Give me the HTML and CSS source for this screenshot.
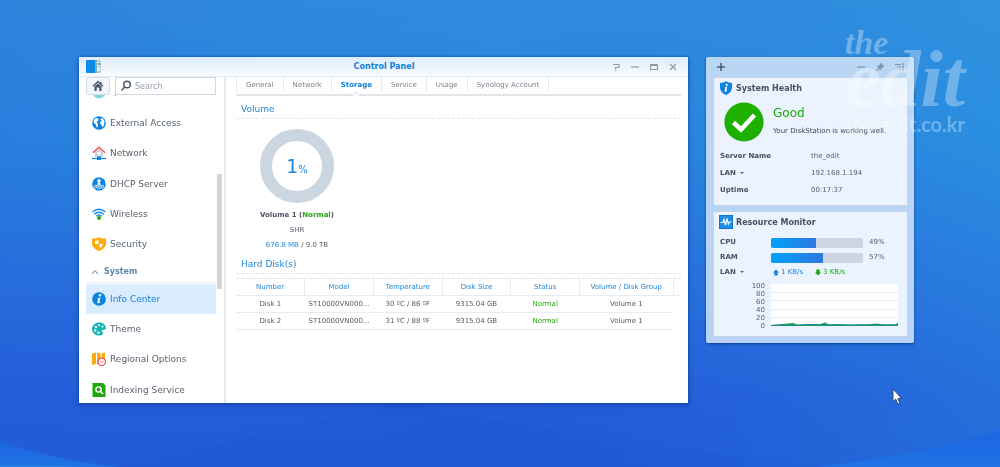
FILE: index.html
```html
<!DOCTYPE html>
<html lang="en">
<head>
<meta charset="utf-8">
<title>Control Panel</title>
<link rel="stylesheet" href="styles.css">
</head>
<body>
<svg class="wallpaper" viewBox="0 0 1000 467" preserveAspectRatio="none" aria-hidden="true">
  <defs>
    <linearGradient id="sky" x1="0" y1="0" x2="0" y2="1"><stop offset="0" stop-color="#2f8bde"/><stop offset=".3" stop-color="#2886e0"/><stop offset=".6" stop-color="#266fde"/><stop offset=".85" stop-color="#235cd9"/><stop offset="1" stop-color="#205ad7"/></linearGradient>
    <linearGradient id="side" x1="0" y1="0" x2="1" y2="0"><stop offset="0" stop-color="#2a60d4" stop-opacity=".2"/><stop offset=".5" stop-color="#2a70d8" stop-opacity="0"/><stop offset="1" stop-color="#30a8e0" stop-opacity=".25"/></linearGradient>
    <linearGradient id="wave" x1="0" y1="0" x2="0" y2="1"><stop offset="0" stop-color="#1d66e0"/><stop offset="1" stop-color="#1f72e6"/></linearGradient>
  </defs>
  <rect width="1000" height="467" fill="url(#sky)"/>
  <rect width="1000" height="467" fill="url(#side)"/>
  <path d="M400 403Q240 440 110 467H830Q600 440 400 403Z" fill="#1a4fcf" opacity=".12"/>
  <path d="M0 441Q55 460 118 467H0Z" fill="url(#wave)"/>
  <path d="M0 465Q40 465 90 467H0Z" fill="#2780ea"/>
  <path d="M1000 430Q920 455 815 467H1000Z" fill="url(#wave)"/>
</svg>

<main class="desktop">
  <section class="window" aria-label="Control Panel">
    <header class="titlebar">
      <svg class="app-icon" viewBox="0 0 15 13"><path d="M0 1Q0 0 1 0H9V13H1Q0 13 0 12Z" fill="#0c8ce8"/><path d="M4 6h2" stroke="#0868b8"/><rect x="9" width="6" height="13" rx="1" fill="#b9c8d0"/><rect x="9" width="2" height="13" fill="#7eaec6"/><rect x="11" y="2" width="3" height="4" fill="#f4f5dc"/><rect x="12" y="3" width="2" height="2" fill="#4caf50"/><rect x="11" y="7" width="3" height="4" fill="#e8eef0"/></svg>
      <h1>Control Panel</h1>
      <div class="controls">
        <button aria-label="Help"><svg viewBox="0 0 8 8"><path d="M1 1.5H7V4.5H3.5V6M3 7.5H4.5"/></svg></button>
        <button aria-label="Minimize"><svg viewBox="0 0 8 8"><path d="M0 4H8"/></svg></button>
        <button aria-label="Maximize"><svg viewBox="0 0 8 8"><path d="M.5 1.5H7.5V6.500H.5ZM.5 2.500H7.500"/></svg></button>
        <button aria-label="Close"><svg viewBox="0 0 8 8"><path d="M1 1L7 7M7 1L1 7"/></svg></button>
      </div>
    </header>
    <div class="body">
      <aside class="sidebar">
        <div class="tools">
          <button class="home" aria-label="Home"><svg viewBox="0 0 12 12"><path d="M1 6.200L6 1.700L11 6.200M8.800 2V4" fill="none" stroke="#4c5868" stroke-width="1.500"/><path d="M2.500 6.500L6 3.500L9.500 6.500V11H7.300V7.500H4.700V11H2.500Z" fill="#4c5868"/></svg></button>
          <label class="search"><svg viewBox="0 0 12 12"><circle cx="7" cy="4.500" r="3.300"/><path d="M4.700 7L1.500 10.500"/></svg><input type="text" placeholder="Search" aria-label="Search"></label>
        </div>
        <nav class="nav">
          <div class="peek"><a href="#"><svg viewBox="0 0 14 14"><circle cx="7" cy="7" r="6.500" fill="#42c9bd"/></svg>QuickConnect</a></div>
          <a href="#"><svg viewBox="0 0 14 14"><circle cx="7" cy="7" r="6.800" fill="#0a84e0"/><path d="M2 4L4 2L6.500 2.500L6 5L4.500 6L6 8L5.500 11.500L4.500 11L3.500 8L1.500 6.500ZM8 3L10.500 2L12.500 5L12 9L10.500 11.500L9.500 9L8 7.500L8.500 5.500L10 5Z" fill="#fff"/></svg>External Access</a>
          <a href="#"><svg viewBox="0 0 14 14"><path d="M3 6.500L7 3L11 6.500V11H3Z" fill="#c9d1d9"/><path d="M1 6.800L7 1.300L13 6.800" fill="none" stroke="#e8524c" stroke-width="1.500"/><rect x="5.500" y="6" width="3" height="3" fill="#fff"/><path d="M0 12.500H14" stroke="#0a84e0" stroke-width="1.200"/><rect x="5" y="10.500" width="4" height="3.500" fill="#0a84e0"/></svg>Network</a>
          <a href="#"><svg viewBox="0 0 14 14"><circle cx="7" cy="7" r="6.800" fill="#0a84e0"/><circle cx="7" cy="3.800" r="1.800" fill="#fff"/><path d="M5 7.500Q7 3 9 7.500Z" fill="#fff"/><path d="M7 7V10M7 7.500L3 9M7 7.500L11 9" stroke="#fff" stroke-width=".8"/><g fill="#0a84e0" stroke="#fff" stroke-width=".8"><circle cx="3.300" cy="9.800" r="1.300"/><circle cx="7" cy="10.500" r="1.300"/><circle cx="10.700" cy="9.800" r="1.300"/></g></svg>DHCP Server</a>
          <a href="#"><svg viewBox="0 0 14 14"><g fill="none" stroke="#1590e4" stroke-width="1.400"><path d="M.5 5Q7-.5 13.500 5"/><path d="M2.300 7.300Q7 3 11.700 7.300"/><path d="M4.200 9.300Q7 6.500 9.800 9.300"/></g><circle cx="7" cy="11" r="2" fill="#1ea80f"/></svg>Wireless</a>
          <a href="#"><svg viewBox="0 0 14 14"><path d="M0 1.500Q4 2 7 .3Q10 2 14 1.500V7Q13.500 11.500 7 14Q.5 11.500 0 7Z" fill="#fbab0d"/><path d="M6.500 3V7H3V4Q5 4 6.500 3ZM7.500 7H11Q10.500 10 7.500 11Z" fill="#fff"/></svg>Security</a>
          <h2><svg viewBox="0 0 8 8"><path d="M1 6L4 2.500L7 6" fill="none" stroke="#5682a6"/></svg>System</h2>
          <a href="#" class="active" aria-current="page"><svg viewBox="0 0 14 14"><circle cx="7" cy="7" r="6.800" fill="#0a84e0"/><circle cx="8" cy="3.300" r="1.200" fill="#fff"/><path d="M5 6.200L8.500 5.500L7.300 10L8.700 9.700Q7.500 11.300 6 11.200Q5 11 5.400 9.800L6.200 6.700Z" fill="#fff"/></svg>Info Center</a>
          <a href="#"><svg viewBox="0 0 14 14"><path d="M7 .5C11 .5 14 3 14 6.200C13.500 8.500 11 7 9.800 8.500C9 10 12 10.500 11 12C9 14 5 14 2.500 12C.5 10.500 0 8.500 0 7C0 3.500 3 .5 7 .5Z" fill="#11b5b4"/><g fill="#fff"><circle cx="3.200" cy="8.500" r="1.200"/><circle cx="3.800" cy="5" r="1.200"/><circle cx="7" cy="3" r="1.100"/><circle cx="10.500" cy="4.500" r="1.100"/><circle cx="6.500" cy="10.800" r="1.200"/></g></svg>Theme</a>
          <a href="#"><svg viewBox="0 0 14 14"><path d="M0 1.500L4 .5V12L0 13ZM5 .5L8.500 1.500V13L5 12ZM9.500 1.500L13 .5V10L9.500 12Z" fill="#fba90c"/><circle cx="9.800" cy="9.800" r="3.700" fill="#fff" stroke="#e5534d" stroke-width="1.200"/><path d="M8 9L9.800 10.200L11.700 9" fill="none" stroke="#e5534d" stroke-width=".8"/></svg>Regional Options</a>
          <a href="#"><svg viewBox="0 0 14 14"><path d="M.5 0H11L13.500 2.500V14H.5Z" fill="#1fa80d"/><circle cx="6.500" cy="6.500" r="2.600" fill="none" stroke="#fff" stroke-width="1.400"/><path d="M8.500 8.500L11 11" stroke="#fff" stroke-width="1.500"/></svg>Indexing Service</a>
        </nav>
        <i class="thumb"></i>
      </aside>

      <div class="content">
        <nav class="tabs"><a href="#">General</a><a href="#">Network</a><a href="#" class="current" aria-current="page">Storage<svg class="notch" viewBox="0 0 10 6"><path d="M0 6V4.500L1 4.500L5 1L9 4.500H10V6Z" fill="#fff"/><path d="M0 4.500H1L5 1L9 4.500H10" fill="none" stroke="#d5dae2"/></svg></a><a href="#">Service</a><a href="#">Usage</a><a href="#">Synology Account</a></nav>
        <h2 class="heading">Volume</h2>
        <div class="volume">
          <div class="donut"><span class="percent">1<small>%</small></span></div>
          <p><b>Volume 1 (<span class="ok">Normal</span>)</b></p>
          <p>SHR</p>
          <p><span class="used">676.8 MB</span> / 9.0 TB</p>
        </div>
        <h2 class="heading">Hard Disk(s)</h2>
        <table class="disks">
          <thead><tr><th>Number</th><th>Model</th><th>Temperature</th><th>Disk Size</th><th>Status</th><th class="wide">Volume / Disk Group</th><td class="spare"></td></tr></thead>
          <tbody>
            <tr><td>Disk 1</td><td>ST10000VN000...</td><td>30 ºC / 86 ºF</td><td>9315.04 GB</td><td class="ok">Normal</td><td>Volume 1</td></tr>
            <tr><td>Disk 2</td><td>ST10000VN000...</td><td>31 ºC / 88 ºF</td><td>9315.04 GB</td><td class="ok">Normal</td><td>Volume 1</td></tr>
          </tbody>
        </table>
      </div>
    </div>
  </section>

  <aside class="widgets" aria-label="Widgets">
    <header class="widget-bar">
      <button aria-label="Add"><svg viewBox="0 0 10 10"><path d="M5 1V9M1 5H9" stroke="#4a5c70" stroke-width="1.500"/></svg></button>
      <span class="space"></span>
      <button aria-label="Minimize"><svg viewBox="0 0 10 10"><path d="M1 5H9" stroke="#7b93a8" stroke-width="1.200"/></svg></button>
      <button aria-label="Pin"><svg viewBox="0 0 10 10"><path d="M5.500 1L9 4.500L8 5L7.500 4.800L6 6.500L6 8L2 4H3.700L5.300 2.500L5 1.700ZM3.500 6L1 9L4.500 6.800Z" fill="#7b93a8" stroke="#7b93a8" stroke-width=".6"/></svg></button>
      <button aria-label="Dock"><svg viewBox="0 0 10 10"><path d="M1 2.500H7M3 5H7M5 7.500H7M9 1V9" stroke="#7b93a8" stroke-width="1.200"/></svg></button>
    </header>
    <section class="panel">
      <h2><svg viewBox="0 0 14 14"><path d="M1 2Q4.500 2 7 .3Q9.500 2 13 2V7Q12.500 11.500 7 14Q1.500 11.500 1 7Z" fill="#0a84e0"/><circle cx="7.700" cy="3.800" r="1.100" fill="#fff"/><path d="M5.500 6.200L8.300 5.600L7.300 9.700L8.500 9.500Q7.500 11 6.200 10.800Q5.300 10.500 5.700 9.400L6.300 6.800Z" fill="#fff"/></svg>System Health</h2>
      <div class="status">
        <svg viewBox="0 0 40 40"><circle cx="20" cy="20" r="19.600" fill="#1db000"/><path d="M9.500 20.500L17 27.500L30.500 13" fill="none" stroke="#fff" stroke-width="4.500"/></svg>
        <div><strong>Good</strong><p>Your DiskStation is working well.</p></div>
      </div>
      <dl class="facts">
        <dt>Server Name</dt><dd>the_edit</dd>
        <dt>LAN <i class="caret"></i></dt><dd>192.168.1.194</dd>
        <dt>Uptime</dt><dd>00:17:37</dd>
      </dl>
    </section>
    <section class="panel">
      <h2><svg viewBox="0 0 14 14"><rect x=".5" y=".5" width="13" height="13" fill="#1f8fe6" stroke="#0a78d0"/><path d="M1.500 7.500H4L5 4.500L6.500 10L8 3.500L9.300 9L10.200 7H12.500" fill="none" stroke="#fff" stroke-width="1.100"/></svg>Resource Monitor</h2>
      <div class="usage">
        <b>CPU</b><span class="bar"><i style="width:49%"></i></span><span>49%</span>
        <b>RAM</b><span class="bar"><i style="width:57%"></i></span><span>57%</span>
        <b>LAN <i class="caret"></i></b>
        <span class="rates"><span class="up"><svg viewBox="0 0 7 7"><path d="M3.500 0L7 3.500H5.500V7H1.500V3.500H0Z"/></svg>1 KB/s</span><span class="down"><svg viewBox="0 0 7 7"><path d="M3.500 7L7 3.500H5.500V0H1.500V3.500H0Z"/></svg>3 KB/s</span></span>
      </div>
      <div class="chart">
        <div class="axis"><span>100</span><span>80</span><span>60</span><span>40</span><span>20</span><span>0</span></div>
        <svg viewBox="0 0 127 42" preserveAspectRatio="none"><rect width="127" height="42" fill="#fff"/><path d="M0 8.500H127M0 16.500H127M0 25.500H127M0 33.500H127" stroke="#e9edf1"/><path d="M0 42V41L12 40L22 39L27 41L36 40L48 40.500L54 38.500L58 40.500L66 40L80 41L96 40.500L106 39.500L112 40.500L124 40.500L127 39V42Z" fill="#22a83c"/><path d="M0 41.400L27 41L40 40.500L60 41L90 40.800L124 41L127 40" fill="none" stroke="#1480bd"/></svg>
      </div>
    </section>
  </aside>
</main>

<div class="watermark" aria-hidden="true"><span class="mark-the">the</span><span class="mark-edit">edit</span><span class="mark-url">the-edit.co.kr</span></div>
<svg class="cursor" viewBox="0 0 10 17" aria-hidden="true"><path d="M1 1V13.500L3.700 11L5.800 16L7.800 15.200L5.800 10.500H9.500Z" fill="#fff" stroke="#26364f" stroke-width=".8"/></svg>
</body>
</html>
```
FILE: styles.css
```css
* { box-sizing: border-box; }

body {
  margin: 0;
  font-family: "DejaVu Sans", Verdana, sans-serif;
  font-size: 7px;
  color: #59636f;
  background: #266fde;
}

h1, h2, p, dl, dd { margin: 0; }
a { color: inherit; text-decoration: none; }
svg { display: block; flex: none; }
button { border: 0; padding: 0; background: none; display: grid; place-items: center; }

.wallpaper { position: fixed; inset: 0; width: 100%; height: 100%; z-index: -1; }

.desktop {
  min-height: 100vh;
  display: flex;
  align-items: flex-start;
  gap: 18px;
  padding: 57px 86px 64px 79px;
}

/* Control Panel window */
.window {
  flex: 1;
  align-self: stretch;
  display: flex;
  flex-direction: column;
  background: #fff;
  box-shadow: 0 0 2px 1px rgba(10, 70, 160, .45), 0 2px 5px rgba(0, 20, 90, .3);
}
.titlebar {
  height: 20px;
  display: grid;
  grid-template-columns: 1fr auto 1fr;
  align-items: center;
  padding: 0 6px 0 7px;
  background: linear-gradient(#dcedfb, #f8fcff);
  border-bottom: 1px solid #e7eef4;
}
.titlebar h1 { font-size: 8px; color: #1280d8; }
.app-icon { width: 15px; height: 13px; }
.controls { display: flex; justify-content: flex-end; }
.controls button { width: 19px; height: 18px; }
.controls svg { width: 8px; height: 8px; fill: none; stroke: #8c9bab; stroke-width: 1.2; }

.body { flex: 1; display: flex; }
.sidebar {
  position: relative;
  width: 147px;
  display: flex;
  flex-direction: column;
  padding-left: 7px;
  border-right: 2px solid #e6e9ed;
  overflow: hidden;
}
.tools { display: flex; gap: 5px; height: 18px; }
.home { width: 24px; height: 18px; border: 1px solid #d5dce5; border-radius: 2px; background: #f2f5f9; }
.home svg, .search svg { width: 12px; height: 12px; }
.search { width: 101px; height: 18px; display: flex; align-items: center; padding-left: 4px; gap: 3px; border: 1px solid #cfd8e2; }
.search svg { fill: none; stroke: #4c5868; stroke-width: 1.5; }
.search input { width: 100%; min-width: 0; border: 0; padding: 0; outline: 0; font: 8px "DejaVu Sans", sans-serif; background: none; }
.search input::placeholder { color: #98a1ab; }

.nav { flex: 1; width: 130px; display: flex; flex-direction: column; margin-bottom: -2px; font-size: 9px; }
.nav a { flex: 1; display: flex; align-items: center; gap: 4px; padding-left: 6px; }
.nav svg { width: 14px; height: 14px; }
.nav .peek { height: 13px; display: flex; align-items: flex-end; overflow: hidden; opacity: .7; }
.peek a { flex: none; height: 32px; }
.nav h2 { height: 23px; display: flex; align-items: center; gap: 5px; padding: 2px 0 0 5px; margin-bottom: 1px; font-size: 8px; color: #5d88aa; border-bottom: 1px solid #e9eef3; }
.nav h2 svg { width: 8px; height: 8px; }
.nav .active { color: #1784d8; background: #d9edfe; }
/* lies over the right edge of the list */
.thumb { position: absolute; right: 2px; top: 97px; width: 5px; height: 115px; background: #d3d5d7; }

.content { flex: 1; min-width: 0; padding: 0 7px 0 10px; }
.tabs { display: flex; height: 19px; border-bottom: 2px solid #e2e5eb; }
.tabs a { position: relative; height: 15px; padding: 0 9px; line-height: 16px; border-right: 1px solid #e2eaf0; color: #7b838c; }
.tabs a:first-child { border-left: 1px solid #e2eaf0; }
.tabs .current { font-weight: bold; color: #0a80dc; }
.notch { position: absolute; left: 50%; bottom: -5px; width: 10px; height: 6px; margin-left: -5px; }

.heading { margin-top: 4px; padding-left: 5px; font-size: 9px; font-weight: normal; line-height: 18px; color: #2389d8; border-bottom: 1px dashed #e3e8ec; }
.volume { width: 122px; padding-top: 10px; text-align: center; }
.donut { width: 74px; height: 74px; margin: 0 auto 5px; display: grid; place-items: center; border: 12px solid #ccd6e0; border-radius: 50%; }
.percent { font-size: 19px; color: #1c84da; }
.percent small { font-size: 10px; }
.volume p { line-height: 15px; }
.volume b { color: #4a5360; }
.used { color: #2389d8; }
.ok, .disks .ok { color: #22a810; }
.volume + .heading { margin-top: 2px; }

.disks { width: 100%; margin-top: 4px; table-layout: fixed; border-collapse: collapse; text-align: center; }
.disks th, .disks td { height: 17px; padding: 0; border-bottom: 1px solid #e7ecf1; color: #555d66; }
.disks th { font-weight: normal; color: #2389d8; border-right: 1px solid #e7ecf1; }
.disks thead { border-top: 1px solid #e7ecf1; }
.disks .wide { width: 21%; }
.disks .spare { width: 8px; }

/* Widget column */
.widgets {
  width: 208px;
  padding: 0 6px 6px 7px;
  background: rgba(210, 228, 249, .85);
  border-radius: 2px;
  box-shadow: 0 1px 3px rgba(0, 30, 100, .6);
}
.widget-bar { height: 20px; display: flex; align-items: center; padding-left: 2px; }
.widget-bar button { width: 12px; height: 20px; margin-right: 7px; }
.widget-bar button:last-child { margin-right: 3px; }
.widget-bar svg { width: 10px; height: 10px; }
.space { flex: 1; }
.panel { padding: 0 9px 6px 5px; background: #eaf3fe; border: 1px solid #c5d3e6; }
.panel + .panel { margin-top: 5px; }
.panel h2 { display: flex; align-items: center; gap: 3px; height: 20px; font-size: 8px; color: #45525f; padding-left: 0; }
.panel h2 svg { width: 14px; height: 14px; }
.status { display: flex; align-items: center; gap: 9px; height: 48px; padding-left: 5px; }
.status > svg { width: 40px; height: 40px; }
.status strong { display: block; font-size: 12px; font-weight: normal; line-height: 18px; color: #1ea80a; }
.status p { line-height: 18px; color: #414a54; white-space: nowrap; }
.facts { display: grid; grid-template-columns: 91px 1fr; line-height: 17px; padding: 2px 0 0 1px; }
.facts dt, .usage b { font-weight: bold; color: #45525f; }
.caret { display: inline-block; margin: 0 0 1px 2px; border: 2px solid transparent; border-top-color: #59636f; border-bottom: 0; }
.usage { display: grid; grid-template-columns: 45px 92px 1fr; column-gap: 6px; align-items: center; line-height: 15px; padding: 3px 0 2px 1px; }
.bar { height: 10px; border-radius: 2px; background: #cdd6e0; overflow: hidden; }
.bar i { display: block; height: 100%; background: linear-gradient(90deg, #00a2fb, #2f77df); }
.rates { grid-column: 2 / 4; display: flex; gap: 12px; padding-left: 2px; }
.rates span { display: flex; align-items: center; gap: 2px; }
.rates svg { width: 6px; height: 7px; fill: currentColor; }
.up { color: #1784e0; }
.down { color: #1ea80a; }
.chart { display: flex; gap: 6px; padding-left: 26px; }
.axis { width: 20px; line-height: 8px; text-align: right; }
.axis span { display: block; }
.chart svg { flex: 1; height: 42px; min-width: 0; margin-top: 2px; }

/* Lies over the desktop */
.watermark { position: absolute; top: 31px; right: 30px; width: 125px; color: rgba(255, 255, 255, .32); pointer-events: none; }
.watermark span { display: block; white-space: nowrap; }
.mark-the, .mark-edit { font-family: "Liberation Serif", serif; font-weight: bold; font-style: italic; }
.mark-the { font-size: 34px; line-height: 24px; }
.mark-edit { font-size: 80px; line-height: 48px; }
.mark-url { padding-top: 11px; font: bold 20px/20px Lato, sans-serif; }
.cursor { position: absolute; left: 89.2%; top: 388px; width: 10px; height: 17px; }
```
